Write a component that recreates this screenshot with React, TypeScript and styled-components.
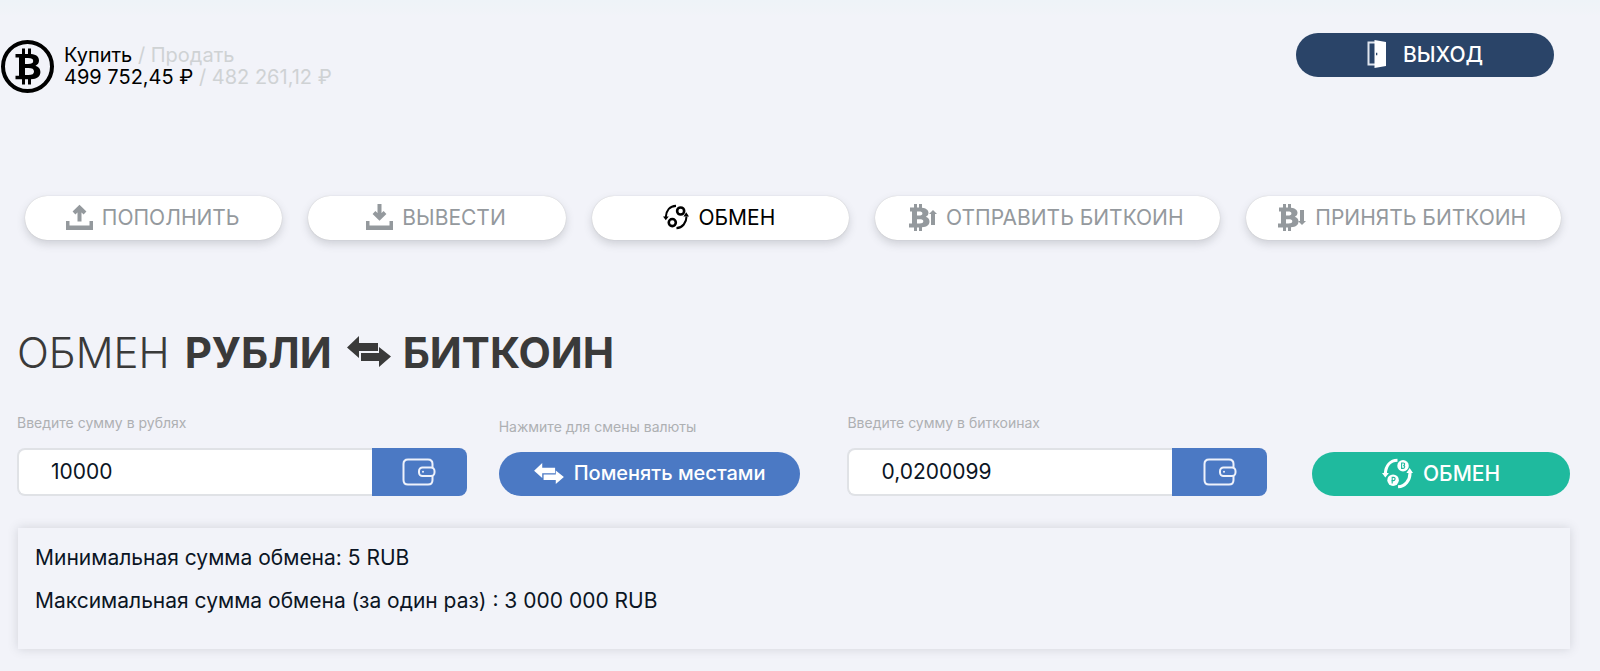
import React, { useState } from 'react';
import styled, { createGlobalStyle, css } from 'styled-components';

const GlobalStyle = createGlobalStyle`
  *, *::before, *::after { box-sizing: border-box; }
  body {
    margin: 0;
    background: #f2f3f9;
    color: #0b1524;
    font-family: Inter, "Liberation Sans", sans-serif;
  }
  button, input { font-family: inherit; }
`;

const Page = styled.div`
  min-height: 100vh;
  background: linear-gradient(#eef3f8, #f0f3f8 10px, #f2f3f9 16px);
`;

const Header = styled.header`
  display: flex;
  justify-content: space-between;
  align-items: flex-start;
  padding: 33px 46px 0 0;
  height: 196px;
`;

const Rates = styled.div`
  display: flex;
  align-items: center;
  gap: 9px;
  margin-top: 6px;
`;

const RateLine = styled.p`
  margin: 0;
  font-size: 20px;
  line-height: 22px;
  color: #000;
`;

const RateText = styled.div`
  margin-bottom: 2px;
`;

const Muted = styled.span`
  color: #cfd2d4;
`;

const pill = css`
  display: flex;
  align-items: center;
  justify-content: center;
  height: 44px;
  border: 0;
  border-radius: 22px;
  white-space: nowrap;
  cursor: pointer;
`;

const ActionButton = styled.button<{ $bg: string; $gap?: number; $size?: number }>`
  ${pill}
  width: 100%;
  gap: ${(p) => p.$gap ?? 10}px;
  padding: 0 8px 2px;
  color: #fff;
  background: ${(p) => p.$bg};
  font-size: ${(p) => p.$size ?? 21}px;
  font-weight: 500;
`;

const LogoutSlot = styled.div`
  width: 258px;
`;

const Tabs = styled.nav`
  display: grid;
  grid-template-columns: 257fr 257fr 257fr 344fr 315fr;
  gap: 26px;
  padding: 0 39px 0 25px;
`;

const Tab = styled.button<{ $active?: boolean }>`
  ${pill}
  gap: 9px;
  padding: 0 2px 2px 0;
  background: #fff;
  color: ${(p) => (p.$active ? '#000' : '#94999d')};
  font-size: 21px;
  box-shadow: 0 0 1px rgba(60, 60, 40, 0.25), 0 4px 8px rgba(80, 85, 95, 0.22);
`;

const Main = styled.main`
  padding: 86px 30px 23px 17px;
`;

const Title = styled.h1`
  display: flex;
  align-items: center;
  margin: 0 0 34px;
  color: #3a3a3a;
  font-size: 42px;
  line-height: 54px;
  font-weight: 300;
  white-space: nowrap;

  svg { margin: 0 12px 4px 15px; }
`;

const Bold = styled.strong`
  font-weight: 700;
`;

const Thin = styled.span`
  margin-right: 15px;
`;

const Form = styled.form`
  display: grid;
  grid-template-columns: 450fr 32fr 302fr 47fr 420fr 45fr 258fr;
  align-items: end;

  > :nth-child(2) { grid-column: 3; }
  > :nth-child(3) { grid-column: 5; }
  > :nth-child(4) { grid-column: 7; }
`;

const Field = styled.div`
  display: flex;
  flex-direction: column;
  gap: 16px;
  min-width: 0;
`;

const labelText = css`
  color: #aeb0b3;
  font-size: 14px;
  line-height: 18px;
`;

const Label = styled.label`
  ${labelText}
`;

const Hint = styled.span`
  ${labelText}
`;

const InputGroup = styled.div`
  display: flex;
  height: 48px;
`;

const AmountInput = styled.input`
  flex: 1;
  min-width: 0;
  padding: 0 32px 2px;
  border: 2px solid #e0e2e6;
  border-right: 0;
  border-radius: 8px 0 0 8px;
  background: #fff;
  color: #0b1524;
  font-size: 21px;
  outline: none;
`;

const WalletButton = styled.button`
  display: flex;
  align-items: center;
  justify-content: center;
  flex: 0 0 95px;
  padding: 0;
  border: 0;
  border-radius: 0 8px 8px 0;
  background: #4b79c4;
  color: #fff;
  cursor: pointer;
`;

const Limits = styled.section`
  margin: 32px 0 0 1px;
  min-height: 121px;
  padding: 13px 17px;
  box-shadow: 0 0 10px rgba(80, 85, 95, 0.2);
`;

const LimitLine = styled.p`
  margin: 0 0 9px;
  font-size: 21px;
  line-height: 34px;
`;

const BTC_BODY =
  'M1 3.500h4V0h3v3.500h2V0h3v3.700c4 .4 6.500 2.300 6.500 5 0 2-1 3.300-2.700 4 2.300.7 3.700 2.300 3.700 4.800 0 3.400-2.500 5.400-7.500 5.700V27h-3v-3.500H8V27H5v-3.500H0V19.500h3V7.500H1V3.500zM8 7.500v4H10c2.200 0 3.400-.6 3.400-2S12.200 7.500 10 7.500zM8 15.200v4.300h2.500c2.500 0 3.800-.6 3.800-2.200s-1.300-2.100-3.800-2.100z';

function LogoIcon() {
  return (
    <svg width="55" height="55" viewBox="0 0 55 55" aria-hidden="true">
      <circle cx="27.500" cy="27.500" r="24.500" fill="none" stroke="#000" strokeWidth="4" />
      <path
        fill="#000"
        fillRule="evenodd"
        d="M15.500 15H22V9.500h3V15h3V9.500h3V15c5.500.5 8 2.800 8 6.500 0 2.600-1.300 4.300-3.500 5.200 3.100.9 4.900 3 4.900 6.200 0 4.500-3.400 7-9.400 7.300v5.300h-3v-5.200h-3v5.200h-3v-5.200h-6.500v-3.500H19V18.600h-3.500zM25 19v6h3c3.500 0 5.200-.8 5.200-3 0-2.300-1.700-3-5.200-3zM25 29v7h3.300c3.900 0 5.700-1 5.700-3.500S32.200 29 28.300 29z"
      />
    </svg>
  );
}

function DoorIcon() {
  return (
    <svg width="20" height="28" viewBox="0 0 20 28" aria-hidden="true">
      <path d="M8 2.500H1.500v22H8" fill="none" stroke="#dfe5ee" strokeWidth="2" />
      <path fill="#fff" fillRule="evenodd" d="M7.500 0 19 2v24L7.500 28zM9 12.700v2.600h1.300v-2.600z" />
    </svg>
  );
}

function TrayIcon({ down = false }: { down?: boolean }) {
  return (
    <svg width="27" height="26" viewBox="0 0 27 26" aria-hidden="true">
      <path d="M0 17h3.500v4.500h20V17H27v9H0z" fill="currentColor" />
      <path
        d={down ? 'M13.500 0v13.500M8 8.500l5.500 5.500L19 8.500' : 'M13.500 17.500V4M8 9l5.500-5.500L19 9'}
        fill="none"
        stroke="currentColor"
        strokeWidth="4"
      />
    </svg>
  );
}

function ExchangeIcon({ size, filled = false }: { size: number; filled?: boolean }) {
  return (
    <svg width={size} height={size} viewBox="0 0 28 28" fill="none" aria-hidden="true">
      <g stroke="currentColor" strokeWidth={filled ? 2.8 : 2.2}>
        <path d="M14 2C7.500 2.100 3.500 7 3 14" />
        <path d="M14.500 26C21 25.700 25.300 20 25.300 13.500" />
        {!filled && <circle cx="19" cy="7.500" r="3.800" strokeWidth="2.800" />}
        {!filled && <circle cx="10" cy="20" r="3.800" strokeWidth="2.800" />}
      </g>
      <path d="M0 13.500h6.200L3 17.500zM22 13.500h6L25 9z" fill="currentColor" />
      {filled && (
        <>
          <circle cx="19" cy="7" r="5.200" fill="currentColor" />
          <circle cx="10" cy="20" r="5.200" fill="currentColor" />
          <path
            d="M17.700 4.500h1.500q1.500.2 1.200 1.300-.2 1-1.200 1 1.500.2 1.300 1.300-.2 1.300-1.500 1.300h-1.300zM9.200 23v-5.500h1.300q1.500.2 1.300 1.500-.3 1.400-1.500 1.400H8.500"
            stroke="#1fba9e"
            strokeWidth="1"
          />
        </>
      )}
    </svg>
  );
}

function BitcoinArrowIcon({ down = false }: { down?: boolean }) {
  return (
    <svg width="28" height="27" viewBox="0 0 28 27" fill="currentColor" aria-hidden="true">
      <path fillRule="evenodd" d={BTC_BODY} />
      <path d={down ? 'M22 6h4v11h2l-4 4-4-4h2z' : 'M22 21h4V10h2l-4-4-4 4h2z'} />
    </svg>
  );
}

function SwapIcon({ width }: { width: number }) {
  return (
    <svg width={width} height={Math.round((width * 31) / 44)} viewBox="0 0 44 31" fill="currentColor" aria-hidden="true">
      <path d="M0 11.500 12 0v7h19v8H12v7z" />
      <path d="M14 17h18v-6l12 9.500L32 31v-6H14z" />
    </svg>
  );
}

function WalletIcon() {
  return (
    <svg width="34" height="28" viewBox="0 0 34 28" fill="none" stroke="#eef2fb" strokeWidth="2" aria-hidden="true">
      <path d="M30.500 9.500V6q0-4.500-4.500-4.500H6Q1.500 1.500 1.500 6v16q0 4.500 4.500 4.500h20q4.500 0 4.500-4.500v-4" />
      <rect x="17" y="9.500" width="15.500" height="8.500" rx="3.500" />
      <circle cx="21" cy="13.700" r="1" fill="#eef2fb" stroke="none" />
    </svg>
  );
}

interface AmountFieldProps {
  id: string;
  label: string;
  value: string;
  onChange: (value: string) => void;
}

function AmountField({ id, label, value, onChange }: AmountFieldProps) {
  return (
    <Field>
      <Label htmlFor={id}>{label}</Label>
      <InputGroup>
        <AmountInput id={id} inputMode="decimal" value={value} onChange={(e) => onChange(e.target.value)} />
        <WalletButton type="button" aria-label="Кошелёк">
          <WalletIcon />
        </WalletButton>
      </InputGroup>
    </Field>
  );
}

const tabs = [
  { label: 'ПОПОЛНИТЬ', icon: <TrayIcon /> },
  { label: 'ВЫВЕСТИ', icon: <TrayIcon down /> },
  { label: 'ОБМЕН', icon: <ExchangeIcon size={26} /> },
  { label: 'ОТПРАВИТЬ БИТКОИН', icon: <BitcoinArrowIcon /> },
  { label: 'ПРИНЯТЬ БИТКОИН', icon: <BitcoinArrowIcon down /> },
];

export default function App() {
  const [active, setActive] = useState('ОБМЕН');
  const [rub, setRub] = useState('10000');
  const [btc, setBtc] = useState('0,0200099');

  return (
    <Page>
      <GlobalStyle />
      <Header>
        <Rates>
          <LogoIcon />
          <RateText>
            <RateLine>
              Купить <Muted>/ Продать</Muted>
            </RateLine>
            <RateLine>
              499 752,45 ₽ <Muted>/ 482 261,12 ₽</Muted>
            </RateLine>
          </RateText>
        </Rates>
        <LogoutSlot>
          <ActionButton type="button" $bg="#2a4468" $gap={16}>
            <DoorIcon />
            ВЫХОД
          </ActionButton>
        </LogoutSlot>
      </Header>

      <Tabs>
        {tabs.map((tab) => (
          <Tab key={tab.label} type="button" $active={tab.label === active} onClick={() => setActive(tab.label)}>
            {tab.icon}
            {tab.label}
          </Tab>
        ))}
      </Tabs>

      <Main>
        <Title>
          <Thin>ОБМЕН</Thin>
          <Bold>РУБЛИ</Bold>
          <SwapIcon width={44} />
          <Bold>БИТКОИН</Bold>
        </Title>

        <Form onSubmit={(e) => e.preventDefault()}>
          <AmountField id="rub" label="Введите сумму в рублях" value={rub} onChange={setRub} />
          <Field>
            <Hint id="swap-hint">Нажмите для смены валюты</Hint>
            <ActionButton type="button" $bg="#4b79c4" $size={20} aria-describedby="swap-hint">
              <SwapIcon width={30} />
              Поменять местами
            </ActionButton>
          </Field>
          <AmountField id="btc" label="Введите сумму в биткоинах" value={btc} onChange={setBtc} />
          <ActionButton type="submit" $bg="#1fba9e">
            <ExchangeIcon size={31} filled />
            ОБМЕН
          </ActionButton>
        </Form>

        <Limits>
          <LimitLine>Минимальная сумма обмена: 5 RUB</LimitLine>
          <LimitLine>Максимальная сумма обмена (за один раз) : 3 000 000 RUB</LimitLine>
        </Limits>
      </Main>
    </Page>
  );
}
